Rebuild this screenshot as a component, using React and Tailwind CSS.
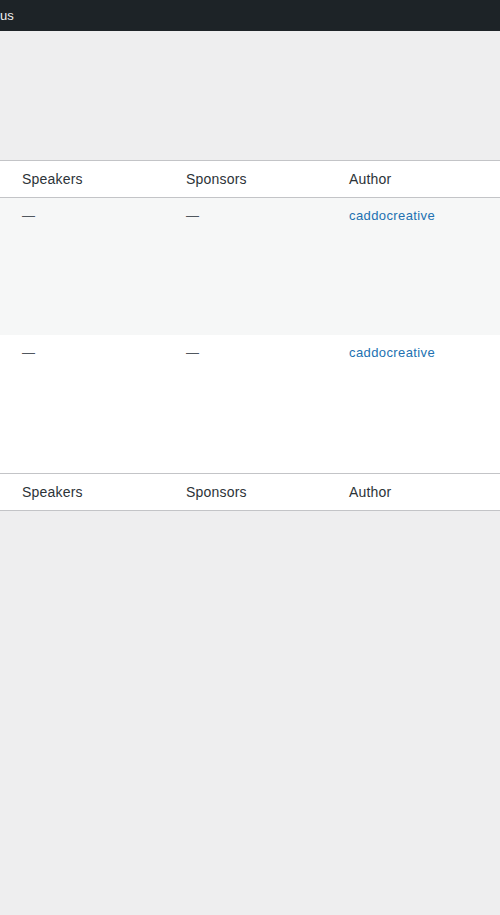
const rows = [
  { speakers: '—', sponsors: '—', author: 'caddocreative', height: 'h-[137px]' },
  { speakers: '—', sponsors: '—', author: 'caddocreative', height: 'h-[138px]' },
]

function HeadRow({ className = '' }) {
  return (
    <div className={`flex h-[37px] items-center px-[22px] pt-[1px] text-[14px] tracking-[0.2px] text-[#2c3338] ${className}`}>
      <div className="w-[164px]">Speakers</div>
      <div className="w-[163px]">Sponsors</div>
      <div className="flex-1">Author</div>
    </div>
  )
}

export default function App() {
  return (
    <div className="min-h-[915px] bg-[#eeeeef] font-['Liberation_Sans',Arial,sans-serif]">
      <div className="flex h-[31px] items-center bg-[#1d2327] text-[13px] text-[#f0f0f1]">us</div>

      <div className="mt-[129px] border-y border-[#c3c4c7] bg-white">
        <HeadRow className="border-b border-[#c3c4c7]" />
        {rows.map((row, i) => (
          <div key={i} className={`flex ${row.height} items-start px-[22px] pt-[9px] text-[13px] leading-[1.4] tracking-[0.4px] text-[#50575e] ${i % 2 === 0 ? 'bg-[#f6f7f7]' : 'bg-white'}`}>
            <div className="w-[164px]">{row.speakers}</div>
            <div className="w-[163px]">{row.sponsors}</div>
            <div className="flex-1 text-[#2271b1]">{row.author}</div>
          </div>
        ))}
        <HeadRow className="border-t border-[#c3c4c7]" />
      </div>
    </div>
  )
}
